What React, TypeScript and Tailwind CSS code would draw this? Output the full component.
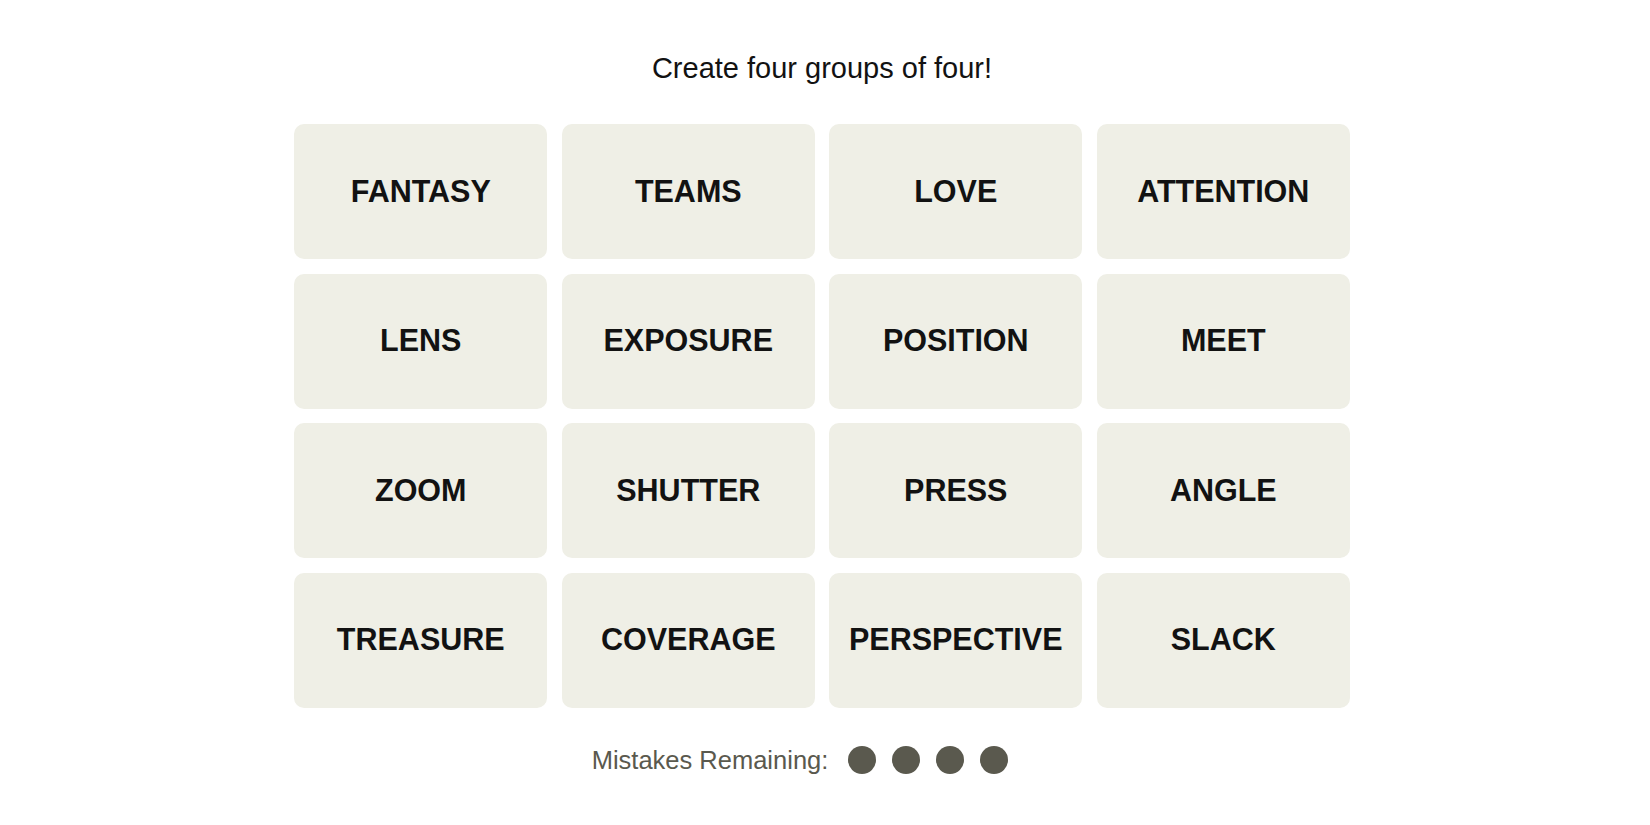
const words = [
  "FANTASY", "TEAMS", "LOVE", "ATTENTION",
  "LENS", "EXPOSURE", "POSITION", "MEET",
  "ZOOM", "SHUTTER", "PRESS", "ANGLE",
  "TREASURE", "COVERAGE", "PERSPECTIVE", "SLACK",
];

export default function App() {
  return (
    <div className="w-full min-h-screen bg-white pr-[6px] flex flex-col items-center font-['Liberation_Sans',Arial,sans-serif]">
      <p className="mt-[51px] text-[29px] leading-[34px] text-[#121212]">
        Create four groups of four!
      </p>

      <div className="mt-[39px] grid grid-cols-[repeat(4,253px)] gap-[14.5px]">
        {words.map((w) => (
          <button
            key={w}
            className="h-[135px] rounded-[10px] bg-[#efefe6] flex items-center justify-center text-[30.5px] font-bold text-[#121212] uppercase"
          >
            {w}
          </button>
        ))}
      </div>

      {/* mistakes row sits a bit left of centre in the original */}
      <div className="mt-[37px] mr-[44px] flex items-center">
        <span className="text-[25.5px] leading-[30px] text-[#5a594e]">Mistakes Remaining:</span>
        <div className="ml-[20px] flex gap-[16px]">
          {[0, 1, 2, 3].map((i) => (
            <span key={i} className="w-[28px] h-[28px] rounded-full bg-[#5a594e]" />
          ))}
        </div>
      </div>
    </div>
  );
}
